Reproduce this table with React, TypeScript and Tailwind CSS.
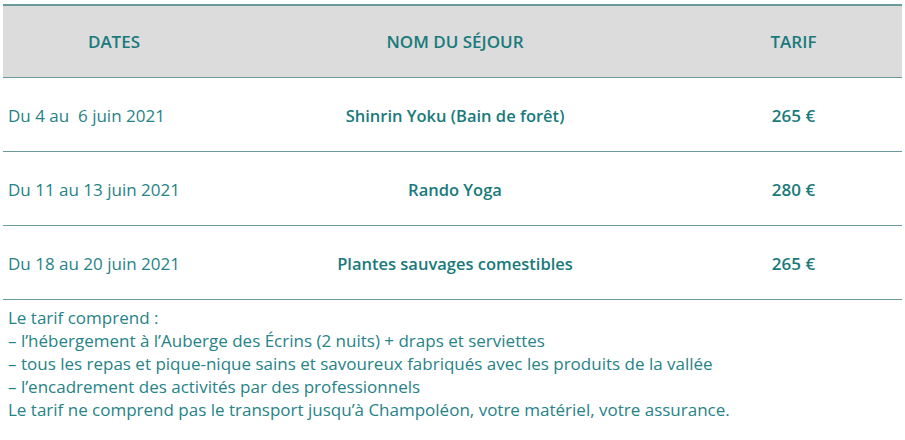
const rows = [
    { dates: 'Du 4 au\u00a0 6 juin 2021', name: 'Shinrin Yoku (Bain de forêt)', price: '265 €' },
    { dates: 'Du 11 au 13 juin 2021', name: 'Rando Yoga', price: '280 €' },
    { dates: 'Du 18 au 20 juin 2021', name: 'Plantes sauvages comestibles', price: '265 €' },
]

const notes = [
    'Le tarif comprend :',
    '– l’hébergement à l’Auberge des Écrins (2 nuits) + draps et serviettes',
    '– tous les repas et pique-nique sains et savoureux fabriqués avec les produits de la vallée',
    '– l’encadrement des activités par des professionnels',
    'Le tarif ne comprend pas le transport jusqu’à Champoléon, votre matériel, votre assurance.',
]

export default function App() {
    return (
        <div className="h-[440px] w-[905px] bg-white pt-1 pl-[3px] pr-[3px] font-['Open_Sans',sans-serif] text-[17px] text-[#268387]">
            <div className="grid grid-cols-[222px_460px_1fr] border-t-2 border-[#6a9a9c]">
                <div className="flex h-[72px] items-center justify-center border-b border-[#6a9a9c] bg-[#dcdcdc] font-semibold text-[#197a7c]">
                    DATES
                </div>
                <div className="flex h-[72px] items-center justify-center border-b border-[#6a9a9c] bg-[#dcdcdc] font-semibold text-[#197a7c]">
                    NOM DU SÉJOUR
                </div>
                <div className="flex h-[72px] items-center justify-center border-b border-[#6a9a9c] bg-[#dcdcdc] font-semibold text-[#197a7c]">
                    TARIF
                </div>
                {rows.map((r) => (
                    <div key={r.dates} className="contents">
                        <div className="flex h-[74px] items-center border-b border-[#6a9a9c] pt-[2px] pl-[5px]">
                            {r.dates}
                        </div>
                        <div className="flex h-[74px] items-center justify-center border-b border-[#6a9a9c] pt-[3px] text-[16.5px] font-semibold text-[#197a7c]">
                            {r.name}
                        </div>
                        <div className="flex h-[74px] items-center justify-center border-b border-[#6a9a9c] pt-[2px] font-semibold text-[#197a7c]">
                            {r.price}
                        </div>
                    </div>
                ))}
            </div>
            <div className="pt-[6px] pl-[5px] leading-[23px]">
                {notes.map((n) => (
                    <div key={n}>{n}</div>
                ))}
            </div>
        </div>
    )
}
